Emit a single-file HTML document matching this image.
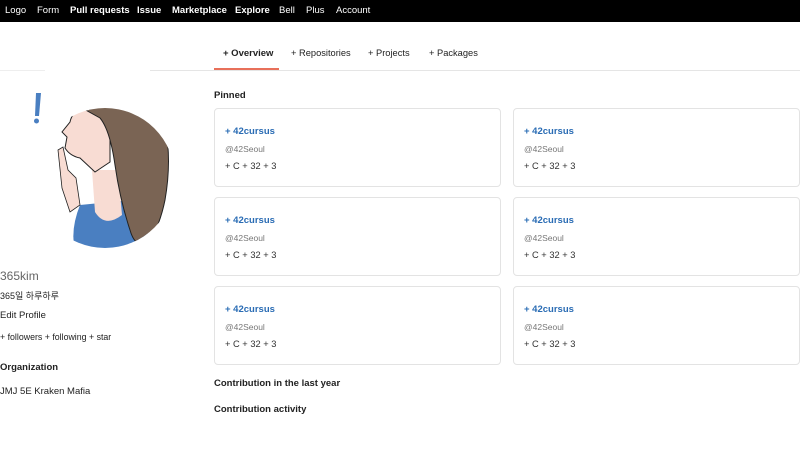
<!DOCTYPE html>
<html><head><meta charset="utf-8"><style>
*{margin:0;padding:0;box-sizing:border-box}
body{width:800px;height:450px;overflow:hidden;background:#fff;font-family:"Liberation Sans","Noto Sans CJK KR",sans-serif;color:#222;position:relative}
.nav{position:absolute;left:0;top:0;width:800px;height:22px;background:#000;color:#fff;font-size:9.5px}
.nav span{position:absolute;top:5px}
.b{font-weight:bold}
.a{position:absolute;white-space:nowrap}
.card{position:absolute;width:287px;height:79px;border:1px solid #e3e3e3;border-radius:4px}
.card .t{position:absolute;left:10px;top:17px;font-size:9.5px;font-weight:bold;color:#2a6cb4}
.card .s{position:absolute;left:10px;top:35px;font-size:8.5px;color:#777}
.card .c{position:absolute;left:10px;top:52px;font-size:9.3px;color:#333}
</style></head><body>
<div class="nav">
<span style="left:5px">Logo</span><span style="left:37px">Form</span><span class="b" style="left:70px">Pull requests</span><span class="b" style="left:137px">Issue</span><span class="b" style="left:172px">Marketplace</span><span class="b" style="left:235px">Explore</span><span style="left:279px">Bell</span><span style="left:306px">Plus</span><span style="left:336px">Account</span>
</div>
<div class="a" style="left:0;top:70px;width:45px;height:1px;background:#eee"></div>
<div class="a" style="left:150px;top:70px;width:650px;height:1px;background:#e5e5e5"></div>
<div class="a" style="left:214px;top:68px;width:65px;height:2px;background:#e8705a"></div>
<div class="a b" style="left:223px;top:48px;font-size:9.5px">+ Overview</div>
<div class="a" style="left:291px;top:48px;font-size:9.3px">+ Repositories</div>
<div class="a" style="left:368px;top:48px;font-size:9.3px">+ Projects</div>
<div class="a" style="left:429px;top:48px;font-size:9.3px">+ Packages</div>

<svg class="a" style="left:28px;top:88px" width="144" height="162" viewBox="28 88 144 162">
<defs><clipPath id="cc"><circle cx="105" cy="178" r="70"/></clipPath></defs>
<path d="M36 93 L41 93 L39 116 L35 116Z" fill="#4a7fc1"/><circle cx="36.5" cy="121" r="2.5" fill="#4a7fc1"/>
<g clip-path="url(#cc)">
<path d="M80 205 Q70 230 75 250 L150 250 Q150 220 130 200Z" fill="#4a7fc1"/>
<path d="M92 170 L118 170 L122 215 Q105 228 95 212Z" fill="#f8dcd3"/>
<path d="M82 108 Q72 112 70 122 L62 132 L67 137 L65 148 Q70 156 80 158 L95 172 L110 162 L110 115Z" fill="#f8dcd3" stroke="#222" stroke-width="1"/>
<path d="M82 108 Q95 88 125 96 Q150 100 165 125 Q172 160 165 200 Q160 225 148 245 Q135 248 130 230 Q120 200 115 165 Q110 130 100 118Z" fill="#7a6454" stroke="#222" stroke-width="1"/>
<path d="M58 150 L63 147 L68 170 L76 178 L80 205 L70 212 L62 188Z" fill="#f8dcd3" stroke="#222" stroke-width="0.8"/>
</g>
</svg>

<div class="a" style="left:0;top:269px;font-size:12px;color:#666">365kim</div>
<div class="a" style="left:0;top:289px;font-size:9px">365일 하루하루</div>
<div class="a" style="left:0;top:310px;font-size:9.5px">Edit Profile</div>
<div class="a" style="left:0;top:332px;font-size:8.8px">+ followers + following + star</div>
<div class="a b" style="left:0;top:362px;font-size:9.5px">Organization</div>
<div class="a" style="left:0;top:386px;font-size:9.5px">JMJ 5E Kraken Mafia</div>

<div class="a b" style="left:214px;top:90px;font-size:9.5px">Pinned</div>
<div class="card" style="left:214px;top:108px"><div class="t">+ 42cursus</div><div class="s">@42Seoul</div><div class="c">+ C + 32 + 3</div></div>
<div class="card" style="left:513px;top:108px"><div class="t">+ 42cursus</div><div class="s">@42Seoul</div><div class="c">+ C + 32 + 3</div></div>
<div class="card" style="left:214px;top:197px"><div class="t">+ 42cursus</div><div class="s">@42Seoul</div><div class="c">+ C + 32 + 3</div></div>
<div class="card" style="left:513px;top:197px"><div class="t">+ 42cursus</div><div class="s">@42Seoul</div><div class="c">+ C + 32 + 3</div></div>
<div class="card" style="left:214px;top:286px"><div class="t">+ 42cursus</div><div class="s">@42Seoul</div><div class="c">+ C + 32 + 3</div></div>
<div class="card" style="left:513px;top:286px"><div class="t">+ 42cursus</div><div class="s">@42Seoul</div><div class="c">+ C + 32 + 3</div></div>
<div class="a b" style="left:214px;top:378px;font-size:9.5px">Contribution in the last year</div>
<div class="a b" style="left:214px;top:404px;font-size:9.5px">Contribution activity</div>
</body></html>
